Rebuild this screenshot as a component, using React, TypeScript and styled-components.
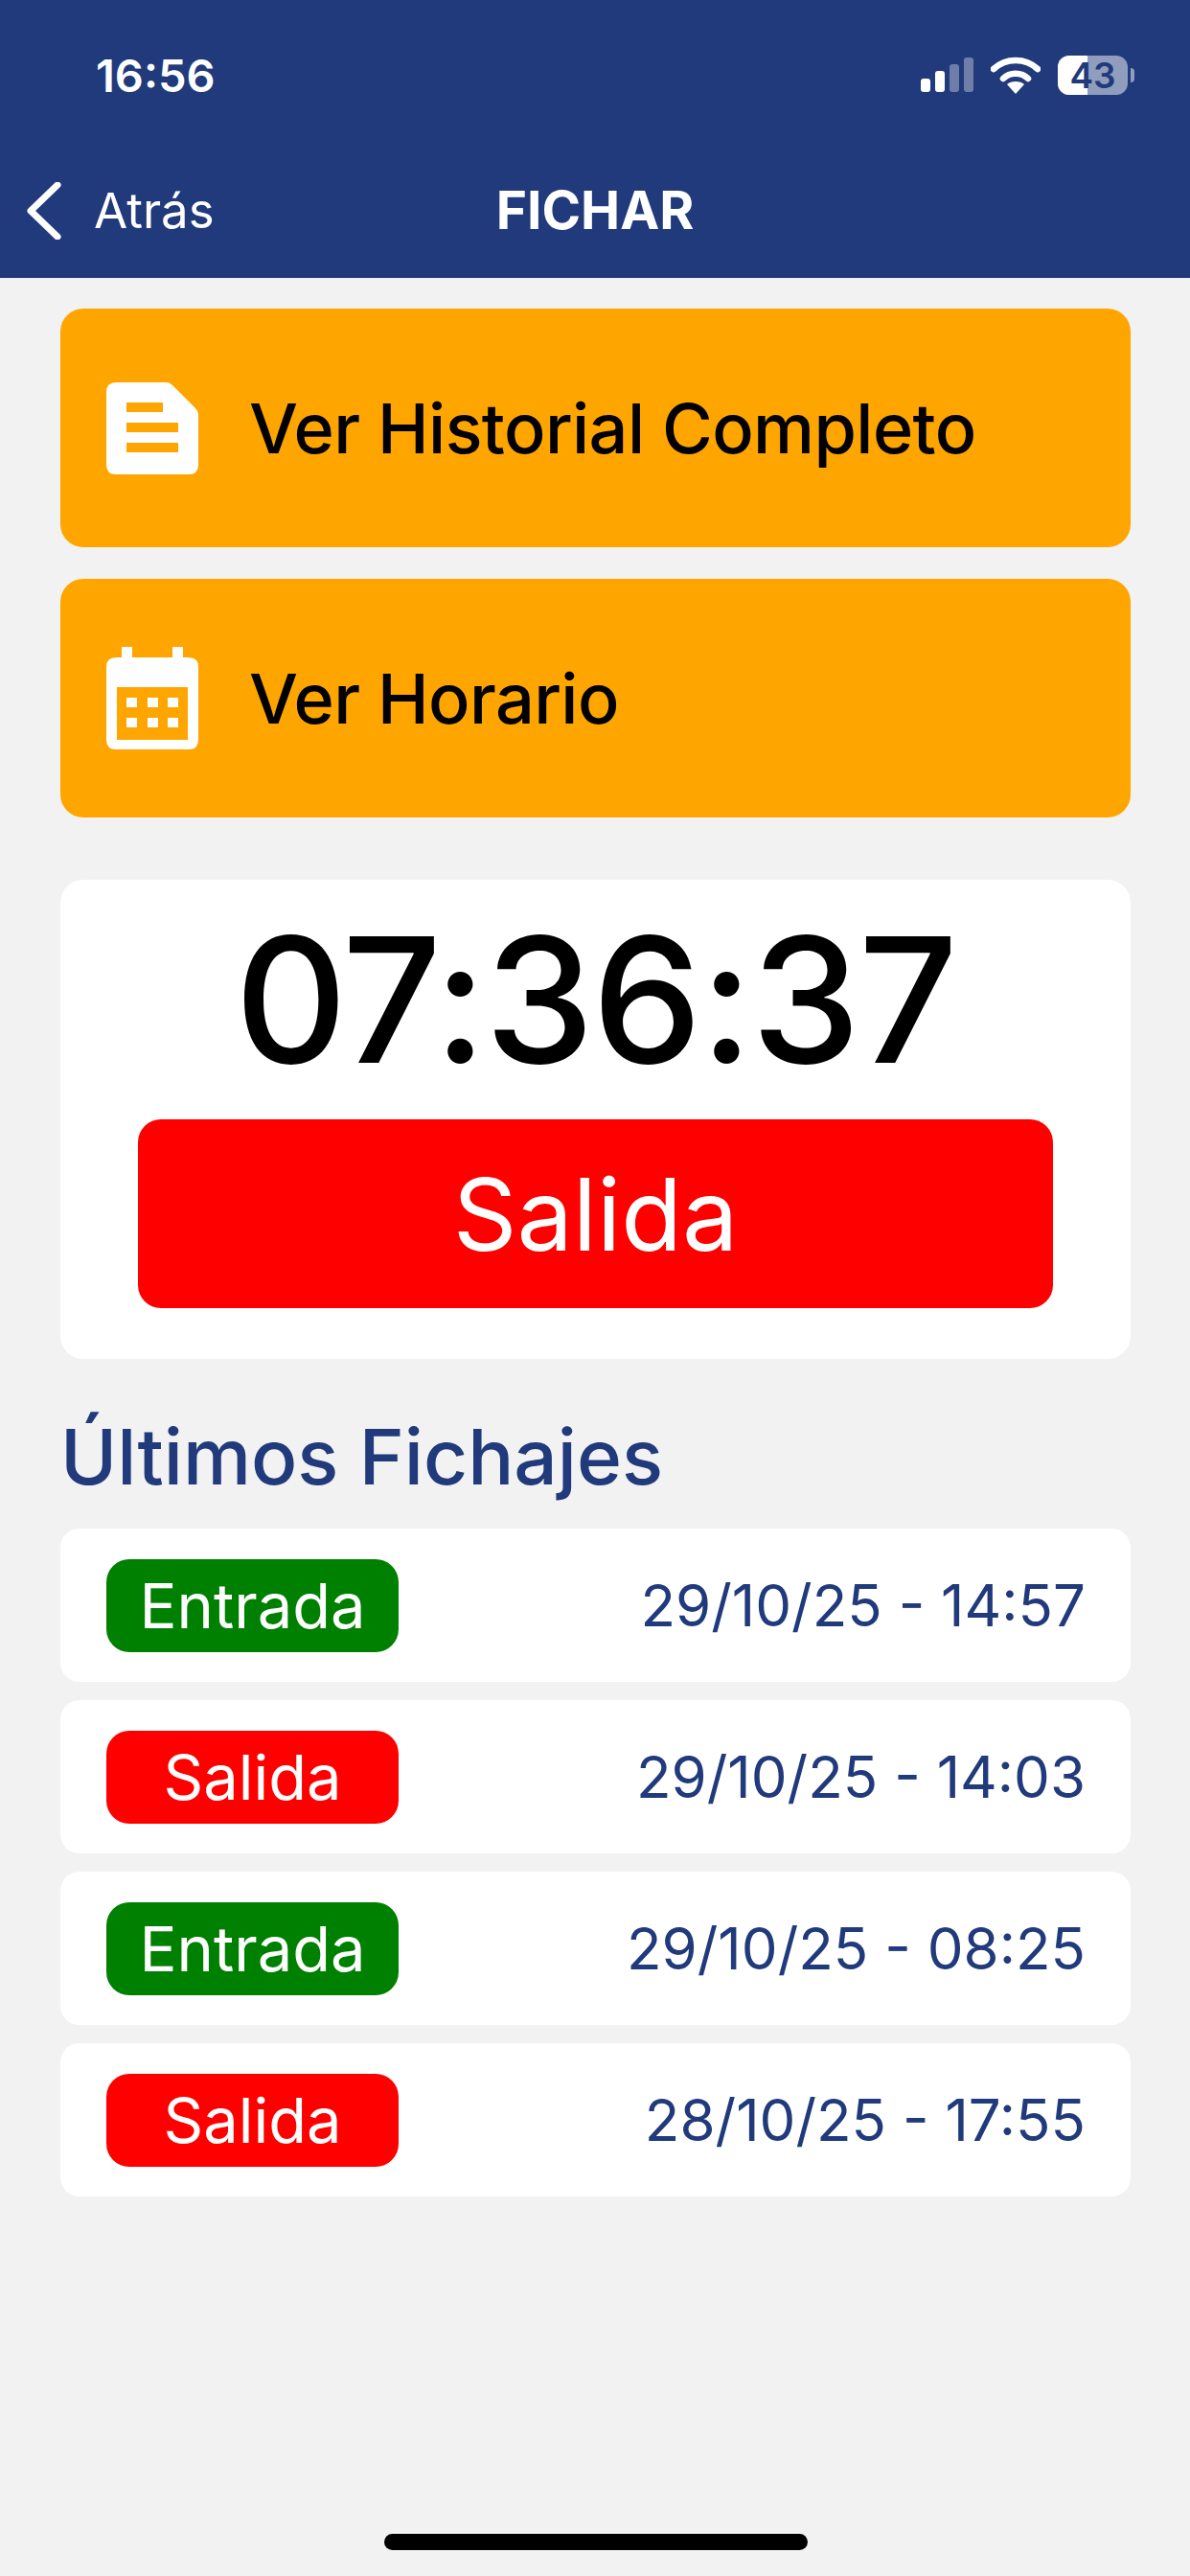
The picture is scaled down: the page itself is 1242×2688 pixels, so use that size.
import React from 'react';
import styled, { createGlobalStyle } from 'styled-components';

const GlobalStyle = createGlobalStyle`
	html, body {
		margin: 0;
		padding: 0;
		background: #f2f2f2;
		font-family: Inter, 'Liberation Sans', sans-serif;
	}
`;

const BLUE = '#213a7b';

type Kind = 'Entrada' | 'Salida';

const RECORDS: { kind: Kind; date: string }[] = [
	{ kind: 'Entrada', date: '29/10/25 - 14:57' },
	{ kind: 'Salida', date: '29/10/25 - 14:03' },
	{ kind: 'Entrada', date: '29/10/25 - 08:25' },
	{ kind: 'Salida', date: '28/10/25 - 17:55' },
];

const DocIcon = () => (
	<svg width="96" height="96" viewBox="0 0 96 96">
		<path
			fill="#fff"
			fillRule="evenodd"
			d="M10 0H63Q66 0 69 3L92 26Q96 30 96 34V86Q96 96 86 96H10Q0 96 0 86V10Q0 0 10 0ZM21 21V31H59V21ZM21 42V52H75V42ZM21 63V73H75V63Z"
		/>
	</svg>
);

const CalendarIcon = () => (
	<svg width="96" height="107" viewBox="0 0 96 107">
		<path
			fill="#fff"
			fillRule="evenodd"
			d="M16 0H27V11H69V0H80V11H86Q96 11 96 21V97Q96 107 86 107H10Q0 107 0 97V21Q0 11 10 11H16ZM11 42V97H85V42Z"
		/>
		<path
			fill="#fff"
			d="M21 53H32V63H21ZM43 53H54V63H43ZM64 53H75V63H64ZM21 74H32V84H21ZM43 74H54V84H43ZM64 74H75V84H64Z"
		/>
	</svg>
);

const SignalIcon = () => (
	<svg width="55" height="36" viewBox="0 0 55 36">
		<rect x="0" y="22" width="10" height="14" rx="3" fill="#fff" />
		<rect x="15" y="14" width="10" height="22" rx="3" fill="#fff" />
		<rect x="30" y="7" width="10" height="29" rx="3" fill="#fff" fillOpacity="0.35" />
		<rect x="45" y="0" width="10" height="36" rx="3" fill="#fff" fillOpacity="0.35" />
	</svg>
);

const WifiIcon = () => (
	<svg width="52" height="39" viewBox="0 0 52 39" fill="none">
		<path d="M3 13C16 1 36 1 49 13" stroke="#fff" strokeWidth="6.5" strokeLinecap="round" />
		<path d="M13 23C20 16 32 16 39 23" stroke="#fff" strokeWidth="6.5" strokeLinecap="round" />
		<path d="M17 29C21 25 31 25 35 29L26 39Z" fill="#fff" />
	</svg>
);

export default function App() {
	return (
		<Screen>
			<GlobalStyle />
			<Header>
				<StatusBar>
					<Clock>16:56</Clock>
					<StatusIcons>
						<SignalIcon />
						<WifiIcon />
						<Battery>
							<BatteryLevel />
							<BatteryText>43</BatteryText>
							<BatteryCap />
						</Battery>
					</StatusIcons>
				</StatusBar>
				<NavBar>
					<BackLink>
						<svg width="36" height="60" viewBox="0 0 36 60" fill="none">
							<path d="M32 3L4 30L32 57" stroke="#fff" strokeWidth="7" strokeLinecap="round" strokeLinejoin="round" />
						</svg>
						<BackText>Atrás</BackText>
					</BackLink>
					<NavTitle>FICHAR</NavTitle>
				</NavBar>
			</Header>

			<Content>
				<ActionList>
					<ActionButton>
						<ActionIcon>
							<DocIcon />
						</ActionIcon>
						Ver Historial Completo
					</ActionButton>
					<ActionButton>
						<ActionIcon>
							<CalendarIcon />
						</ActionIcon>
						Ver Horario
					</ActionButton>
				</ActionList>

				<TimerCard>
					<Timer>07:36:37</Timer>
					<ExitButton>Salida</ExitButton>
				</TimerCard>

				<SectionTitle>Últimos Fichajes</SectionTitle>
				<RecordList>
					{RECORDS.map((record) => (
						<RecordRow key={record.date}>
							<Badge $kind={record.kind}>{record.kind}</Badge>
							<RecordDate>{record.date}</RecordDate>
						</RecordRow>
					))}
				</RecordList>
			</Content>

			<HomeIndicator />
		</Screen>
	);
}

const Screen = styled.div`
	position: relative;
	width: 1242px;
	height: 2688px;
	overflow: hidden;
	background: #f2f2f2;
`;

const Header = styled.header`
	height: 290px;
	background: ${BLUE};
	color: #fff;
`;

const StatusBar = styled.div`
	height: 156px;
	box-sizing: border-box;
	padding: 0 65px 0 100px;
	display: flex;
	align-items: center;
	justify-content: space-between;
`;

const Clock = styled.span`
	font-size: 47px;
	font-weight: 600;
`;

const StatusIcons = styled.div`
	display: flex;
	align-items: center;
	gap: 18px;
`;

const Battery = styled.div`
	position: relative;
	width: 73px;
	height: 41px;
	border-radius: 12px;
	background: rgba(255, 255, 255, 0.5);
`;

const BatteryLevel = styled.div`
	width: 31px;
	height: 100%;
	border-radius: 12px 0 0 12px;
	background: #fff;
`;

const BatteryText = styled.span`
	position: absolute;
	inset: 0;
	display: flex;
	align-items: center;
	justify-content: center;
	font-size: 37px;
	font-weight: 600;
	color: ${BLUE};
`;

const BatteryCap = styled.div`
	position: absolute;
	left: 76px;
	top: 13px;
	width: 4px;
	height: 15px;
	border-radius: 0 4px 4px 0;
	background: rgba(255, 255, 255, 0.5);
`;

const NavBar = styled.nav`
	position: relative;
	height: 126px;
	display: flex;
	align-items: center;
	justify-content: center;
`;

const BackLink = styled.div`
	position: absolute;
	left: 28px;
	top: 33px;
	display: flex;
	align-items: center;
	gap: 34px;
`;

const BackText = styled.span`
	font-size: 51px;
	font-weight: 400;
`;

const NavTitle = styled.h1`
	margin: 0;
	font-size: 55px;
	font-weight: 700;
`;

const Content = styled.main`
	padding: 32px 62px 0 63px;
`;

const ActionList = styled.div`
	display: flex;
	flex-direction: column;
	gap: 33px;
`;

const ActionButton = styled.div`
	height: 249px;
	box-sizing: border-box;
	padding-left: 48px;
	display: flex;
	align-items: center;
	border-radius: 24px;
	background: #ffa500;
	color: #000;
	font-size: 72px;
	font-weight: 500;
	letter-spacing: -0.6px;
`;

const ActionIcon = styled.span`
	width: 96px;
	margin-right: 53px;
	display: flex;
	align-items: center;
	justify-content: center;
`;

const TimerCard = styled.section`
	height: 500px;
	margin-top: 65px;
	box-sizing: border-box;
	padding: 0 81px;
	display: flex;
	flex-direction: column;
	align-items: center;
	border-radius: 24px;
	background: #fff;
`;

const Timer = styled.div`
	height: 250px;
	display: flex;
	align-items: center;
	font-size: 182px;
	font-weight: 500;
	letter-spacing: -2px;
	color: #000;
`;

const ExitButton = styled.div`
	width: 100%;
	height: 197px;
	display: flex;
	align-items: center;
	justify-content: center;
	border-radius: 24px;
	background: #f00;
	color: #fff;
	font-size: 104px;
	font-weight: 400;
`;

const SectionTitle = styled.h2`
	margin: 62px 0 36px;
	height: 79px;
	line-height: 79px;
	font-size: 80px;
	font-weight: 500;
	color: ${BLUE};
`;

const RecordList = styled.div`
	display: flex;
	flex-direction: column;
	gap: 19px;
`;

const RecordRow = styled.div`
	height: 160px;
	box-sizing: border-box;
	padding: 0 47px 0 48px;
	display: flex;
	align-items: center;
	justify-content: space-between;
	border-radius: 20px;
	background: #fff;
`;

const Badge = styled.span<{ $kind: Kind }>`
	width: 305px;
	height: 97px;
	display: flex;
	align-items: center;
	justify-content: center;
	border-radius: 24px;
	background: ${({ $kind }) => ($kind === 'Entrada' ? '#008000' : '#f00')};
	color: #fff;
	font-size: 65px;
	font-weight: 400;
`;

const RecordDate = styled.span`
	font-size: 60px;
	font-weight: 400;
	color: ${BLUE};
`;

const HomeIndicator = styled.div`
	position: absolute;
	left: 401px;
	bottom: 27px;
	width: 442px;
	height: 17px;
	border-radius: 9px;
	background: #000;
`;
